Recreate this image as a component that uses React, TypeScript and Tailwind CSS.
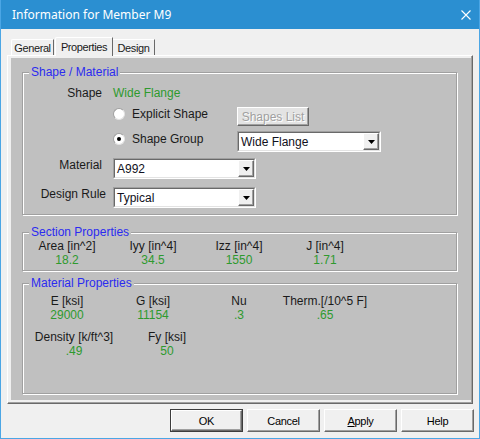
import React from 'react'

const GREEN = 'text-[#2e9a2e]'

function GroupBox({ title, className, children }: { title: string; className?: string; children: React.ReactNode }) {
    return (
        <fieldset className={`w-[435px] border border-[#a0a0a0] shadow-[inset_1px_1px_0_#fff,1px_1px_0_#fff] ${className ?? ''}`}>
            <legend className="ml-[6px] px-[2px] bg-[#c0c0c0] text-[#2b2bf0]">{title}</legend>
            {children}
        </fieldset>
    )
}

function Radio({ checked }: { checked?: boolean }) {
    return (
        <span className="w-[12px] h-[12px] rounded-full bg-white border border-[#a0a0a0] border-r-[#e3e3e3] border-b-[#e3e3e3] flex items-center justify-center shrink-0">
            {checked && <span className="w-[4px] h-[4px] rounded-full bg-black" />}
        </span>
    )
}

function Combo({ value, className }: { value: string; className?: string }) {
    return (
        <div className={`h-[21px] border border-[#a0a0a0] border-r-white border-b-white ${className ?? ''}`}>
            <div className="h-full flex bg-white border border-[#696969] border-r-[#e3e3e3] border-b-[#e3e3e3]">
                <span className="flex-1 pl-[2px] flex items-center text-[#101020]">{value}</span>
                <span className="w-[16px] h-full bg-[#f0f0f0] border border-white border-r-[#696969] border-b-[#696969] shadow-[inset_-1px_-1px_0_#a0a0a0] flex items-center justify-center">
                    <svg width="7" height="4" viewBox="0 0 7 4">
                        <polygon points="0,0 7,0 3.5,4" fill="#000" />
                    </svg>
                </span>
            </div>
        </div>
    )
}

function Btn({ children, isDefault }: { children: React.ReactNode; isDefault?: boolean }) {
    return (
        <div className={`w-[73px] h-[23px] ${isDefault ? 'border border-[#3c3c3c]' : ''}`}>
            <div className="h-full bg-[#f0f0f0] border border-white border-r-[#696969] border-b-[#696969] shadow-[inset_-1px_-1px_0_#a0a0a0] flex items-center justify-center text-[11px] tracking-[-0.3px] text-black">
                {children}
            </div>
        </div>
    )
}

export default function App() {
    return (
        <div className="w-[480px] h-[439px] flex flex-col bg-[#f0f0f0] border-x border-b border-[#4ba6e5] font-['Liberation_Sans',Arial,sans-serif] text-[12px] leading-[14px] text-[#1a1a1a] overflow-hidden">
            {/* title bar */}
            <div className="h-[29px] -mx-px shrink-0 bg-[#2b8fd1] flex items-center pl-[12px] pr-[9px]">
                <span className="text-white text-[12px] font-['Noto_Sans',sans-serif]">Information for Member M9</span>
                <svg className="ml-auto" width="10" height="10" viewBox="0 0 10 10">
                    <path d="M0.5 0.5 L9.5 9.5 M9.5 0.5 L0.5 9.5" stroke="#fff" strokeWidth="1.1" />
                </svg>
            </div>

            <div className="pl-[6px] pt-[8px] flex flex-col">
                {/* tabs */}
                <div className="h-[18px] flex items-end pl-[4px] text-[11px] tracking-[-0.4px]">
                    <div className="w-[43px] h-[16px] pt-[1px] border-t border-l border-white border-r border-r-[#696969] rounded-tl-[2px] flex items-center justify-center">General</div>
                    <div className="ml-[1px] w-[58px] h-[19px] -mb-px relative z-10 bg-[#f0f0f0] border-t border-l border-white border-r border-r-[#696969] rounded-tl-[2px] flex items-center justify-center pb-[1px]">Properties</div>
                    <div className="w-[42px] h-[16px] pt-[1px] border-t border-white border-r border-r-[#696969] flex items-center justify-center">Design</div>
                </div>

                {/* tab page */}
                <div className="w-[466px] h-[349px] border border-white border-r-[#696969] border-b-[#696969]">
                    <div className="h-full border-r border-b border-[#a0a0a0] pl-[3px] pt-[2px] pb-[2px]">
                        <div className="h-full bg-[#c0c0c0] pl-[11px] flex flex-col">
                            <GroupBox title="Shape / Material" className="mt-[7px]">
                                <div className="pt-[7px] pb-[6px]">
                                    <div className="flex">
                                        <div className="w-[79px] text-right">Shape</div>
                                        <div className={`ml-[11px] ${GREEN}`}>Wide Flange</div>
                                    </div>
                                    <div className="flex items-start mt-[7px] pl-[90px]">
                                        <div className="w-[124px] h-[14px] flex items-center">
                                            <Radio />
                                            <span className="ml-[7px]">Explicit Shape</span>
                                        </div>
                                        <div className="w-[72px] h-[19px] bg-[#e3e3e3] border border-white border-r-[#696969] border-b-[#696969] shadow-[inset_-1px_-1px_0_#a0a0a0] flex items-center justify-center text-[#a0a0a0] [text-shadow:1px_1px_0_#fff]">Shapes List</div>
                                    </div>
                                    <div className="flex items-start mt-[5px] pl-[90px]">
                                        <div className="w-[124px] h-[16px] flex items-center">
                                            <Radio checked />
                                            <span className="ml-[7px]">Shape Group</span>
                                        </div>
                                        <Combo value="Wide Flange" className="w-[144px]" />
                                    </div>
                                    <div className="flex items-start mt-[6px]">
                                        <div className="w-[79px] text-right">Material</div>
                                        <Combo value="A992" className="ml-[11px] w-[143px]" />
                                    </div>
                                    <div className="flex items-start mt-[8px]">
                                        <div className="w-[83px] text-right">Design Rule</div>
                                        <Combo value="Typical" className="ml-[7px] w-[143px]" />
                                    </div>
                                </div>
                            </GroupBox>

                            <GroupBox title="Section Properties" className="mt-[10px]">
                                <div className="pl-[1px] pb-[3px] grid grid-cols-[86px_86px_86px_86px] text-center">
                                    <div>Area [in^2]</div>
                                    <div>Iyy [in^4]</div>
                                    <div>Izz [in^4]</div>
                                    <div>J [in^4]</div>
                                    <div className={GREEN}>18.2</div>
                                    <div className={GREEN}>34.5</div>
                                    <div className={GREEN}>1550</div>
                                    <div className={GREEN}>1.71</div>
                                </div>
                            </GroupBox>

                            <GroupBox title="Material Properties" className="mt-[5px] mb-[6px] flex-1">
                                <div className="pt-[4px] pl-[1px] text-center">
                                    <div className="grid grid-cols-[86px_86px_86px_86px]">
                                        <div>E [ksi]</div>
                                        <div>G [ksi]</div>
                                        <div>Nu</div>
                                        <div>Therm.[/10^5 F]</div>
                                        <div className={GREEN}>29000</div>
                                        <div className={GREEN}>11154</div>
                                        <div className={GREEN}>.3</div>
                                        <div className={GREEN}>.65</div>
                                    </div>
                                    <div className="grid grid-cols-[100px_86px] mt-[8px]">
                                        <div>Density [k/ft^3]</div>
                                        <div>Fy [ksi]</div>
                                        <div className={GREEN}>.49</div>
                                        <div className={GREEN}>50</div>
                                    </div>
                                </div>
                            </GroupBox>
                        </div>
                    </div>
                </div>

                {/* buttons */}
                <div className="mt-[5px] pr-[5px] flex justify-end gap-[4px]">
                    <Btn isDefault>OK</Btn>
                    <Btn>Cancel</Btn>
                    <Btn><span><span className="underline">A</span>pply</span></Btn>
                    <Btn>Help</Btn>
                </div>
            </div>
        </div>
    )
}
